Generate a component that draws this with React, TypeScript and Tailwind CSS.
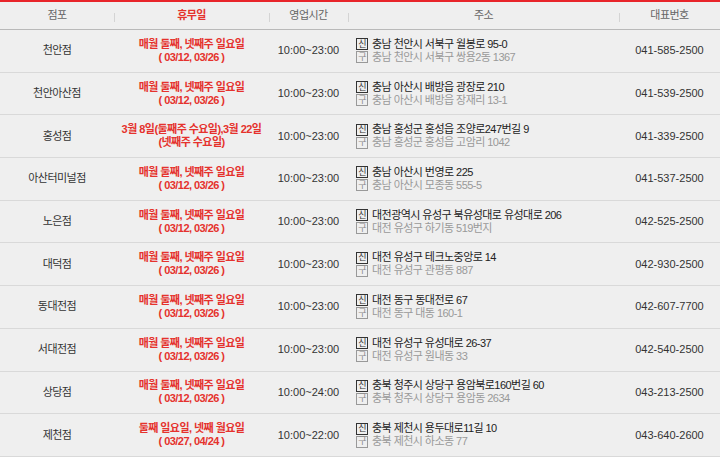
import React from 'react';

type Store = {
  name: string;
  off: [string, string];
  hours: string;
  road: string;
  lot: string;
  tel: string;
};

const STORES: Store[] = [
  { name: '천안점', off: ['매월 둘째, 넷째주 일요일', '( 03/12, 03/26 )'], hours: '10:00~23:00', road: '충남 천안시 서북구 월봉로 95-0', lot: '충남 천안시 서북구 쌍용2동 1367', tel: '041-585-2500' },
  { name: '천안아산점', off: ['매월 둘째, 넷째주 일요일', '( 03/12, 03/26 )'], hours: '10:00~23:00', road: '충남 아산시 배방읍 광장로 210', lot: '충남 아산시 배방읍 장재리 13-1', tel: '041-539-2500' },
  { name: '홍성점', off: ['3월 8일(둘째주 수요일),3월 22일', '(넷째주 수요일)'], hours: '10:00~23:00', road: '충남 홍성군 홍성읍 조양로247번길 9', lot: '충남 홍성군 홍성읍 고암리 1042', tel: '041-339-2500' },
  { name: '아산터미널점', off: ['매월 둘째, 넷째주 일요일', '( 03/12, 03/26 )'], hours: '10:00~23:00', road: '충남 아산시 번영로 225', lot: '충남 아산시 모종동 555-5', tel: '041-537-2500' },
  { name: '노은점', off: ['매월 둘째, 넷째주 일요일', '( 03/12, 03/26 )'], hours: '10:00~23:00', road: '대전광역시 유성구 북유성대로 유성대로 206', lot: '대전 유성구 하기동 519번지', tel: '042-525-2500' },
  { name: '대덕점', off: ['매월 둘째, 넷째주 일요일', '( 03/12, 03/26 )'], hours: '10:00~23:00', road: '대전 유성구 테크노중앙로 14', lot: '대전 유성구 관평동 887', tel: '042-930-2500' },
  { name: '동대전점', off: ['매월 둘째, 넷째주 일요일', '( 03/12, 03/26 )'], hours: '10:00~23:00', road: '대전 동구 동대전로 67', lot: '대전 동구 대동 160-1', tel: '042-607-7700' },
  { name: '서대전점', off: ['매월 둘째, 넷째주 일요일', '( 03/12, 03/26 )'], hours: '10:00~23:00', road: '대전 유성구 유성대로 26-37', lot: '대전 유성구 원내동 33', tel: '042-540-2500' },
  { name: '상당점', off: ['매월 둘째, 넷째주 일요일', '( 03/12, 03/26 )'], hours: '10:00~24:00', road: '충북 청주시 상당구 용암북로160번길 60', lot: '충북 청주시 상당구 용암동 2634', tel: '043-213-2500' },
  { name: '제천점', off: ['둘째 일요일, 넷째 월요일', '( 03/27, 04/24 )'], hours: '10:00~22:00', road: '충북 제천시 용두대로11길 10', lot: '충북 제천시 하소동 77', tel: '043-640-2600' },
];

const COLS = 'grid grid-cols-[114px_155px_79px_271px_1fr]';

function HeadCell({ label, red, sep }: { label: string; red?: boolean; sep?: boolean }) {
  return (
    <div className="relative flex items-center justify-center">
      {sep && <span className="absolute left-0 top-[11px] h-[9px] w-px bg-[#d4d4d4]" />}
      <span className={red ? 'text-[#e5322d] font-bold' : 'text-[#666]'}>{label}</span>
    </div>
  );
}

export default function App() {
  return (
    <div
      className="w-[720px] h-[457px] overflow-hidden bg-[#efefef] border-t-2 border-[#e8242a] text-[11px] tracking-[-0.05em] text-[#333]"
      style={{ fontFamily: '"Liberation Sans", "Noto Sans CJK KR", sans-serif' }}
    >
      <div className={`${COLS} h-[28px] border-b border-[#b9b9b9]`}>
        <HeadCell label="점포" />
        <HeadCell label="휴무일" red sep />
        <HeadCell label="영업시간" sep />
        <HeadCell label="주소" sep />
        <HeadCell label="대표번호" sep />
      </div>

      {STORES.map(s => (
        <div key={s.name} className={`${COLS} h-[42.7px] border-b border-[#d9d9d9] leading-[13px]`}>
          <div className="flex items-center justify-center">{s.name}</div>
          <div className="flex items-center justify-center whitespace-pre-line text-center font-bold text-[#e5322d]">
            {`${s.off[0]}\n${s.off[1]}`}
          </div>
          <div className="flex items-center justify-center tracking-normal">{s.hours}</div>
          <div className="flex flex-col justify-center pl-[8px]">
            <div className="flex items-center gap-[4px]">
              <span className="flex h-[12px] w-[12px] items-center justify-center border border-[#333] text-[9px] leading-none text-[#333]">신</span>
              <span className="text-[#222]">{s.road}</span>
            </div>
            <div className="flex items-center gap-[4px]">
              <span className="flex h-[12px] w-[12px] items-center justify-center border border-[#999] text-[9px] leading-none text-[#888]">구</span>
              <span className="text-[#999]">{s.lot}</span>
            </div>
          </div>
          <div className="flex items-center justify-center tracking-normal">{s.tel}</div>
        </div>
      ))}
    </div>
  );
}
